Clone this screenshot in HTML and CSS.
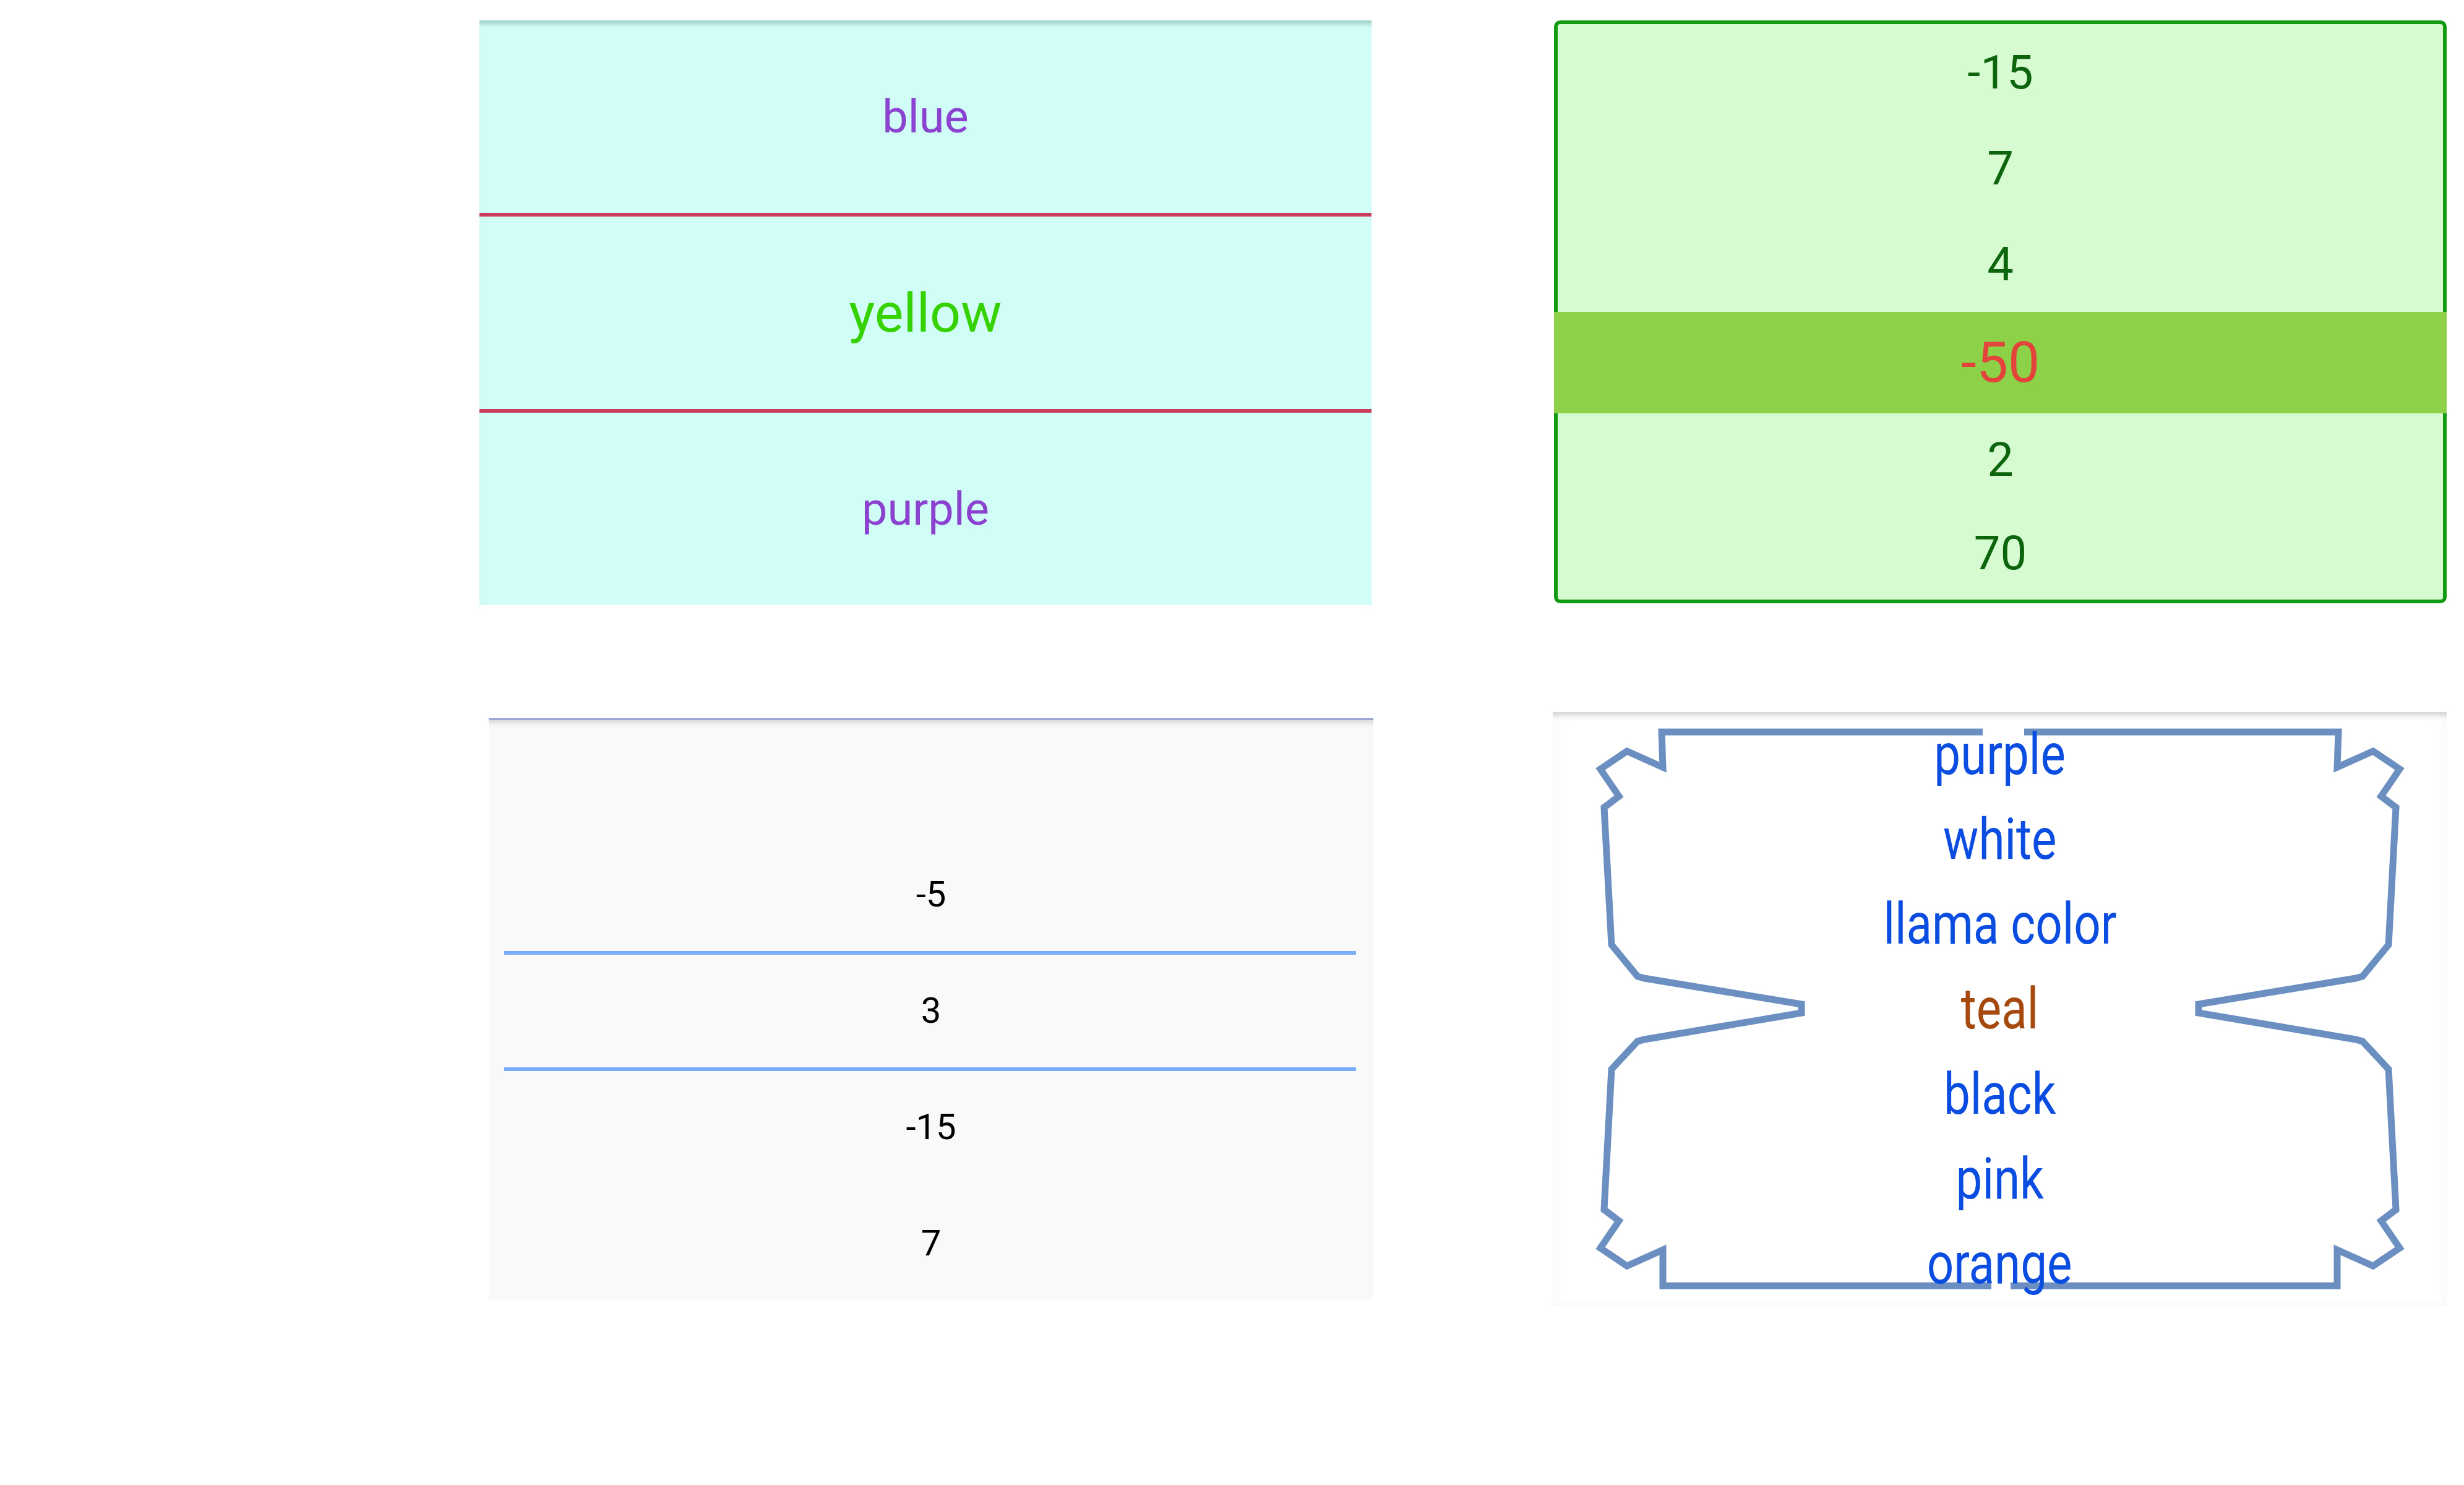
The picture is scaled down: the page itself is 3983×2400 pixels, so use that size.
FILE: index.html
```html
<!DOCTYPE html>
<html lang="en">
<head>
<meta charset="utf-8">
<title>Pickers</title>
<link rel="stylesheet" href="styles.css">
</head>
<body>
<main class="board">
  <section class="picker teal">
    <div class="t-row"><span>blue</span></div>
    <div class="t-rule"></div>
    <div class="t-row sel"><span>yellow</span></div>
    <div class="t-rule"></div>
    <div class="t-row"><span>purple</span></div>
  </section>

  <section class="picker green">
    <div class="g-row"><span>-15</span></div>
    <div class="g-row"><span>7</span></div>
    <div class="g-row"><span>4</span></div>
    <div class="g-row sel"><span>-50</span></div>
    <div class="g-row"><span>2</span></div>
    <div class="g-row"><span>70</span></div>
  </section>

  <section class="picker gray">
    <div class="s-row"></div>
    <div class="s-row"><span>-5</span></div>
    <div class="s-rule"></div>
    <div class="s-row"><span>3</span></div>
    <div class="s-rule"></div>
    <div class="s-row"><span>-15</span></div>
    <div class="s-row"><span>7</span></div>
  </section>

  <section class="picker shaped">
    <svg class="frame" viewBox="2510 1151 1445 960" aria-hidden="true">
      <path d="M3205 1183 H2686 L2688 1240 L2630 1214 L2587 1243 L2617 1287 L2593 1305 L2605 1527 L2647 1578 L2658 1581 L2912 1623 L2912 1637 L2658 1680 L2647 1683 L2605 1728 L2593 1955 L2617 1973 L2587 2017 L2630 2046 L2688 2020 L2688 2078 H3219"/>
      <path d="M3272 1183 H3780 L3778 1240 L3836 1214 L3879 1243 L3849 1287 L3873 1305 L3861 1527 L3819 1578 L3808 1581 L3554 1623 L3554 1637 L3808 1680 L3819 1683 L3861 1728 L3873 1955 L3849 1973 L3879 2017 L3836 2046 L3778 2020 L3778 2078 H3250"/>
    </svg>
    <div class="c-list">
      <div class="c-row"><span>purple</span></div>
      <div class="c-row"><span>white</span></div>
      <div class="c-row"><span>llama color</span></div>
      <div class="c-row sel"><span>teal</span></div>
      <div class="c-row"><span>black</span></div>
      <div class="c-row"><span>pink</span></div>
      <div class="c-row"><span>orange</span></div>
    </div>
  </section>
</main>
</body>
</html>
```

FILE: styles.css
```css
html, body {
  margin: 0;
  padding: 0;
  background: #ffffff;
}

body {
  font-family: Roboto, "Noto Sans", "Liberation Sans", sans-serif;
  font-weight: 400;
}

.board {
  display: grid;
  grid-template-columns: 1445px 1445px;
  column-gap: 290px;
  row-gap: 173px;
  padding: 33px 0 0 775px;
  align-items: start;
}

.picker {
  box-sizing: border-box;
}

/* ---------- teal picker ---------- */
.teal {
  width: 1442px;
  height: 945px;
  display: flex;
  flex-direction: column;
  background: #d1fdf7;
  box-shadow: inset 0 11px 8px -6px rgba(40, 110, 100, 0.35);
}

.t-row {
  flex: 1;
  display: flex;
  align-items: center;
  justify-content: center;
  font-size: 74px;
  color: #8b42cf;
}

.t-row.sel {
  font-size: 88px;
  color: #35d200;
}

.t-rule {
  height: 6px;
  background: #c93d5b;
}

/* ---------- green picker ---------- */
.green {
  width: 1443px;
  height: 942px;
  margin-left: 2px;
  display: flex;
  flex-direction: column;
  border: 6px solid #129a12;
  border-radius: 10px;
  background: #d6fbd0;
}

.g-row {
  flex: none;
  height: 155px;
  display: flex;
  align-items: center;
  justify-content: center;
  font-size: 76px;
  color: #0c650c;
}

.g-row.sel {
  height: 164px;
  margin: 0 -6px;
  background: #8cd147;
  color: #e3433a;
  font-size: 91px;
}

.g-row.sel ~ .g-row {
  flex: 1;
  height: auto;
}

/* ---------- gray picker ---------- */
.gray {
  width: 1430px;
  height: 939px;
  margin: 10px 0 0 15px;
  overflow: hidden;
  background: #f9f9f9;
  border-top: 2px solid #7d88cc;
  box-shadow: inset 0 11px 8px -6px rgba(0, 0, 0, 0.14);
}

.s-row {
  height: 188px;
  display: flex;
  align-items: center;
  justify-content: center;
  font-size: 58px;
  color: #000000;
}

.s-rule {
  height: 6px;
  margin: -2px 28px -4px 25px;
  background: #79adfc;
}

/* ---------- shaped picker ---------- */
.shaped {
  width: 1445px;
  height: 960px;
  position: relative;
  background: #ffffff;
  box-shadow: inset 0 11px 8px -6px rgba(0, 0, 0, 0.16), inset 0 0 22px rgba(0, 0, 0, 0.035);
}

.frame {
  position: absolute;
  inset: 0;
  width: 100%;
  height: 100%;
}

.frame path {
  fill: none;
  stroke: #6b8fc0;
  stroke-width: 11;
  stroke-linejoin: miter;
}

.c-list {
  position: relative;
  height: 100%;
  display: flex;
  flex-direction: column;
}

.c-row {
  flex: 1;
  display: flex;
  align-items: center;
  justify-content: center;
  font-size: 93px;
  color: #0b4de0;
  white-space: nowrap;
}

.c-row span {
  display: inline-block;
  transform: scaleX(0.82);
}

.c-row.sel {
  color: #a5490f;
}
```
